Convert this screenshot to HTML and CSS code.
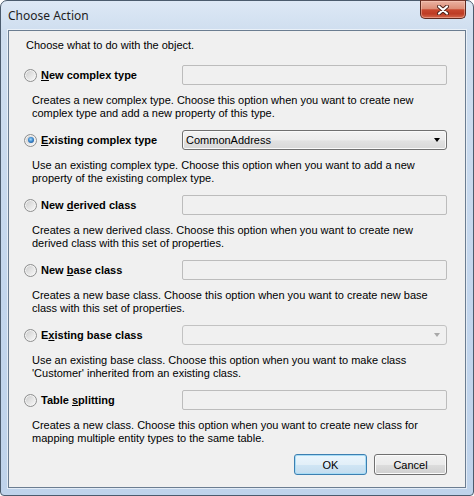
FILE: index.html
```html
<!DOCTYPE html>
<html>
<head>
<meta charset="utf-8">
<title>Choose Action</title>
<link rel="stylesheet" href="styles.css">
</head>
<body>
<div class="window">
  <div class="titlebar">
    <span class="title">Choose Action</span>
    <div class="close">
      <svg width="12" height="10" viewBox="0 0 12 10">
        <path d="M2 1.5 L10 8.5 M10 1.5 L2 8.5" stroke="#4a2018" stroke-width="4" stroke-linecap="round" fill="none"/>
        <path d="M2 1.5 L10 8.5 M10 1.5 L2 8.5" stroke="#ffffff" stroke-width="2.2" stroke-linecap="round" fill="none"/>
      </svg>
    </div>
  </div>
  <div class="client">
    <p class="intro">Choose what to do with the object.</p>
    <div class="options">
      <div class="option">
        <div class="row">
          <label class="choice"><span class="radio"></span><span class="label"><u>N</u>ew complex type</span></label>
          <div class="textbox"></div>
        </div>
        <p class="desc">Creates a new complex type. Choose this option when you want to create new<br>complex type and add a new property of this type.</p>
      </div>
      <div class="option">
        <div class="row">
          <label class="choice"><span class="radio checked"></span><span class="label"><u>E</u>xisting complex type</span></label>
          <div class="combo"><span class="combo-text">CommonAddress</span><span class="arrow"></span></div>
        </div>
        <p class="desc">Use an existing complex type. Choose this option when you want to add a new<br>property of the existing complex type.</p>
      </div>
      <div class="option">
        <div class="row">
          <label class="choice"><span class="radio"></span><span class="label">New <u>d</u>erived class</span></label>
          <div class="textbox"></div>
        </div>
        <p class="desc">Creates a new derived class. Choose this option when you want to create new<br>derived class with this set of properties.</p>
      </div>
      <div class="option">
        <div class="row">
          <label class="choice"><span class="radio"></span><span class="label">New <u>b</u>ase class</span></label>
          <div class="textbox"></div>
        </div>
        <p class="desc">Creates a new base class. Choose this option when you want to create new base<br>class with this set of properties.</p>
      </div>
      <div class="option">
        <div class="row">
          <label class="choice"><span class="radio"></span><span class="label">E<u>x</u>isting base class</span></label>
          <div class="combo disabled"><span class="combo-text"></span><span class="arrow"></span></div>
        </div>
        <p class="desc">Use an existing base class. Choose this option when you want to make class<br>'Customer' inherited from an existing class.</p>
      </div>
      <div class="option">
        <div class="row">
          <label class="choice"><span class="radio"></span><span class="label">Table <u>s</u>plitting</span></label>
          <div class="textbox"></div>
        </div>
        <p class="desc">Creates a new class. Choose this option when you want to create new class for<br>mapping multiple entity types to the same table.</p>
      </div>
    </div>
    <div class="buttons">
      <button class="btn default">OK</button>
      <button class="btn">Cancel</button>
    </div>
  </div>
</div>
</body>
</html>
```

FILE: styles.css
```css
html, body {
  margin: 0;
  padding: 0;
  background: #ffffff;
}

.window {
  width: 474px;
  height: 496px;
  box-sizing: border-box;
  border: 1px solid #4b5b6d;
  border-radius: 7px 7px 4px 4px;
  background: linear-gradient(180deg, #dde8f5 0px, #cfdeef 30px, #c3d6ed 60%, #bfd3eb 100%);
  padding: 0 7px 7px 7px;
  display: flex;
  flex-direction: column;
  font-family: "Liberation Sans", Arial, sans-serif;
  font-size: 11px;
  color: #000;
}

.titlebar {
  height: 29px;
  display: flex;
  justify-content: space-between;
  align-items: flex-start;
}

.title {
  font-family: "Noto Sans", "Liberation Sans", sans-serif;
  font-size: 12px;
  line-height: 16px;
  padding-top: 7px;
  color: #1e1e1e;
}

.close {
  width: 46px;
  height: 19px;
  box-sizing: border-box;
  margin-top: -1px;
  border: 1px solid #5e2a20;
  border-top-color: #7a3a2e;
  border-radius: 0 0 5px 5px;
  background: linear-gradient(180deg, #eab2a2 0%, #dd8e78 45%, #c7472e 52%, #bd3c24 75%, #d4674c 100%);
  box-shadow: inset 0 0 0 1px rgba(255, 210, 195, 0.45);
  display: flex;
  align-items: center;
  justify-content: center;
}

.client {
  flex: 1;
  border: 1px solid #6b7d91;
  background: #f0f0f0;
  padding-top: 8px;
  display: flex;
  flex-direction: column;
  box-shadow: 0 0 0 1px rgba(255, 255, 255, 0.55);
}

.intro {
  margin: 0 0 13px 17px;
  line-height: 13px;
}

.options {
  display: flex;
  flex-direction: column;
  gap: 10px;
}

.row {
  height: 20px;
  display: flex;
  align-items: center;
}

.choice {
  width: 158px;
  margin-left: 15px;
  display: flex;
  align-items: center;
  gap: 4px;
}

.label {
  font-weight: bold;
}

.radio {
  width: 13px;
  height: 13px;
  box-sizing: border-box;
  border-radius: 50%;
  border: 1px solid #8e8f8f;
  background: linear-gradient(135deg, #c9c9c9 0%, #e3e3e3 50%, #fbfbfb 100%);
  box-shadow: inset 0 0 0 1px #f4f4f4;
  position: relative;
}

.radio.checked::after {
  content: "";
  position: absolute;
  left: 2.5px;
  top: 2.5px;
  width: 6px;
  height: 6px;
  border-radius: 50%;
  background: radial-gradient(circle at 45% 40%, #a9dcfa 0%, #3d8ad0 45%, #163f7a 100%);
}

.textbox {
  width: 265px;
  height: 20px;
  box-sizing: border-box;
  border: 1px solid #bcbcbc;
  border-radius: 2px;
  background: #f0f0f0;
}

.combo {
  width: 265px;
  height: 20px;
  box-sizing: border-box;
  border: 1px solid #707070;
  border-radius: 3px;
  background: linear-gradient(180deg, #f3f3f3 0%, #ececec 50%, #e1e1e1 55%, #d8d8d8 100%);
  box-shadow: inset 0 0 0 1px #fafafa;
  display: flex;
  align-items: center;
  justify-content: space-between;
  padding: 0 6px 0 3px;
}

.combo-text {
  line-height: 13px;
}

.arrow {
  width: 0;
  height: 0;
  border-left: 3.5px solid transparent;
  border-right: 3.5px solid transparent;
  border-top: 4px solid #000;
}

.combo.disabled {
  border-color: #c2c2c2;
  background: #f0f0f0;
  box-shadow: none;
}

.combo.disabled .arrow {
  border-top-color: #a8a8a8;
}

.desc {
  margin: 9px 0 0 23px;
  line-height: 13px;
}

.buttons {
  margin-top: 9px;
  margin-right: 18px;
  display: flex;
  justify-content: flex-end;
  gap: 7px;
}

.btn {
  width: 73px;
  height: 21px;
  box-sizing: border-box;
  padding: 0;
  font-family: "Liberation Sans", Arial, sans-serif;
  font-size: 11px;
  color: #000;
  border: 1px solid #707070;
  border-radius: 3px;
  background: linear-gradient(180deg, #f2f2f2 0%, #ebebeb 50%, #dddddd 51%, #cfcfcf 100%);
  box-shadow: inset 0 0 0 1px #fbfbfb;
}

.btn.default {
  border-color: #3c7fb1;
  box-shadow: inset 0 0 0 1px #a8dcf5;
  background: linear-gradient(180deg, #eaf6fd 0%, #e2eff8 50%, #d0e6f5 51%, #c4dcee 100%);
}
```
